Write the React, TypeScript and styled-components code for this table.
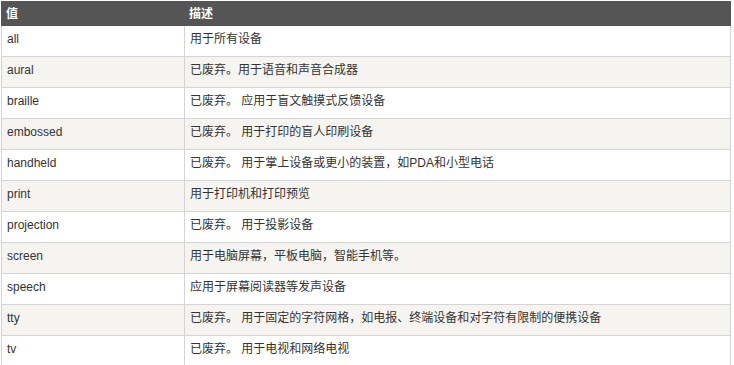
import * as React from "react";
import styled, { createGlobalStyle } from "styled-components";

const GlobalStyle = createGlobalStyle`
  html, body {
    margin: 0;
    padding: 0;
    background: #fff;
  }
`;

const Wrapper = styled.div`
  padding: 1px 0 0 1px;
  font-family: "Liberation Sans", Arial, "Noto Sans CJK SC", sans-serif;
  font-size: 12px;
  color: #333;
`;

const Table = styled.table`
  width: 730px;
  border-collapse: collapse;
  table-layout: fixed;
`;

const HeadCell = styled.th`
  background: #555;
  color: #fff;
  border: 1px solid #555;
  font-weight: bold;
  text-align: left;
  vertical-align: top;
  padding: 5px 4px 4px;
  line-height: 14px;
`;

const Row = styled.tr<{ $alt: boolean }>`
  background: ${(p) => (p.$alt ? "#f6f4f0" : "#fff")};
`;

const Cell = styled.td`
  border: 1px solid #d4d4d4;
  vertical-align: top;
  padding: 1px 5px 5px;
  line-height: 24px;
  height: 24px;
`;

const rows: [string, string][] = [
  ["all", "用于所有设备"],
  ["aural", "已废弃。用于语音和声音合成器"],
  ["braille", "已废弃。 应用于盲文触摸式反馈设备"],
  ["embossed", "已废弃。 用于打印的盲人印刷设备"],
  ["handheld", "已废弃。 用于掌上设备或更小的装置，如PDA和小型电话"],
  ["print", "用于打印机和打印预览"],
  ["projection", "已废弃。 用于投影设备"],
  ["screen", "用于电脑屏幕，平板电脑，智能手机等。"],
  ["speech", "应用于屏幕阅读器等发声设备"],
  ["tty", "已废弃。 用于固定的字符网格，如电报、终端设备和对字符有限制的便携设备"],
  ["tv", "已废弃。 用于电视和网络电视"],
];

export default function App() {
  return (
    <Wrapper>
      <GlobalStyle />
      <Table>
        <colgroup>
          <col style={{ width: 183 }} />
          <col />
        </colgroup>
        <thead>
          <tr>
            <HeadCell>值</HeadCell>
            <HeadCell>描述</HeadCell>
          </tr>
        </thead>
        <tbody>
          {rows.map(([value, desc], i) => (
            <Row key={value} $alt={i % 2 === 1}>
              <Cell>{value}</Cell>
              <Cell>{desc}</Cell>
            </Row>
          ))}
        </tbody>
      </Table>
    </Wrapper>
  );
}
